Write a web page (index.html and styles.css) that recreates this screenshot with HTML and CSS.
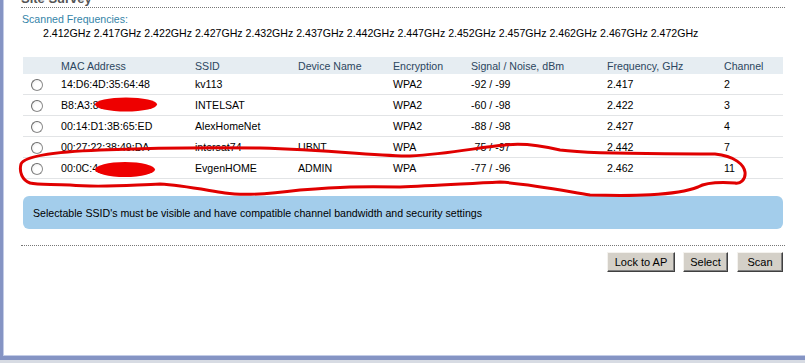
FILE: index.html
```html
<!DOCTYPE html>
<html lang="en">
<head>
    <meta charset="UTF-8">
    <title>Site Survey</title>
    <link rel="stylesheet" href="styles.css">
</head>
<body>
    <!-- Window Frame -->
    <div class="frame">
        <div class="page">
            <h2 class="title">Site Survey</h2>
            <div class="label">Scanned Frequencies:</div>
            <div class="freqs">2.412GHz 2.417GHz 2.422GHz 2.427GHz 2.432GHz 2.437GHz 2.442GHz 2.447GHz 2.452GHz 2.457GHz 2.462GHz 2.467GHz 2.472GHz</div>

            <!-- Survey Table -->
            <table class="survey">
                <colgroup>
                    <col style="width:38px">
                    <col style="width:134px">
                    <col style="width:103px">
                    <col style="width:95px">
                    <col style="width:78px">
                    <col style="width:136px">
                    <col style="width:117px">
                    <col>
                </colgroup>
                <thead>
                    <tr>
                        <th></th>
                        <th>MAC Address</th>
                        <th>SSID</th>
                        <th>Device Name</th>
                        <th>Encryption</th>
                        <th>Signal / Noise, dBm</th>
                        <th>Frequency, GHz</th>
                        <th>Channel</th>
                    </tr>
                </thead>
                <tbody>
                    <tr>
                        <td><span class="radio"></span></td>
                        <td>14:D6:4D:35:64:48</td>
                        <td>kv113</td>
                        <td></td>
                        <td>WPA2</td>
                        <td>-92 / -99</td>
                        <td>2.417</td>
                        <td>2</td>
                    </tr>
                    <tr>
                        <td><span class="radio"></span></td>
                        <td>B8:A3:8</td>
                        <td>INTELSAT</td>
                        <td></td>
                        <td>WPA2</td>
                        <td>-60 / -98</td>
                        <td>2.422</td>
                        <td>3</td>
                    </tr>
                    <tr>
                        <td><span class="radio"></span></td>
                        <td>00:14:D1:3B:65:ED</td>
                        <td>AlexHomeNet</td>
                        <td></td>
                        <td>WPA2</td>
                        <td>-88 / -98</td>
                        <td>2.427</td>
                        <td>4</td>
                    </tr>
                    <tr>
                        <td><span class="radio"></span></td>
                        <td>00:27:22:38:49:DA</td>
                        <td>intersat74</td>
                        <td>UBNT</td>
                        <td>WPA</td>
                        <td>-75 / -97</td>
                        <td>2.442</td>
                        <td>7</td>
                    </tr>
                    <tr>
                        <td><span class="radio"></span></td>
                        <td>00:0C:4</td>
                        <td>EvgenHOME</td>
                        <td>ADMIN</td>
                        <td>WPA</td>
                        <td>-77 / -96</td>
                        <td>2.462</td>
                        <td>11</td>
                    </tr>
                </tbody>
            </table>

            <div class="note">Selectable SSID's must be visible and have compatible channel bandwidth and security settings</div>

            <div class="actions">
                <button class="btn btn-lock">Lock to AP</button>
                <button class="btn btn-select">Select</button>
                <button class="btn btn-scan">Scan</button>
            </div>
        </div>

        <!-- Hand-drawn marks over the screenshot -->
        <svg class="marks" width="805" height="363" viewBox="0 0 805 363">
            <ellipse cx="126" cy="104.5" rx="31" ry="7" fill="#ee0000"/>
            <ellipse cx="125" cy="169.5" rx="30" ry="7.5" fill="#ee0000"/>
            <path d="M30 183 C22 180 19 172 21 164 C24 157 50 152 100 150 C150 148 200 147 260 148 C330 150 380 156 410 156 C450 154 480 147 505 145 C520 143 535 144 560 150 C600 155 660 153 715 154 C735 156 744 165 745 172 C746 180 740 184 735 183 C720 182 705 183 698 187 C675 196 630 196 590 195 C560 190 530 184 500 182 C460 184 430 186 400 187 C360 186 340 187 300 190 C270 194 245 196 225 193 C200 189 180 185 160 184 C130 185 100 188 70 185 C50 184 38 185 30 183"
                  fill="none" stroke="#e00000" stroke-width="3" stroke-linecap="round" stroke-linejoin="round"/>
        </svg>
    </div>
</body>
</html>
```

FILE: styles.css
```css
/* Global Styling */
body {
    margin: 0;
    background-color: #d7dbe3;
    font-family: "Liberation Sans", Arial, sans-serif;
    font-size: 10.6px;
    color: #000;
}
/* Window Frame */
.frame {
    position: relative;
    width: 805px;
    height: 360px;
    box-sizing: border-box;
    background-color: #fff;
    border-left: 3px solid #8594c4;
    border-bottom: 4px solid #8594c4;
    box-shadow: inset 1px -1px 0 #c3cce6;
    overflow: hidden;
}
.page {
    padding: 0 20px 0 18px;
}
/* Title */
.title {
    margin: -9px 0 0;
    height: 15px;
    padding-bottom: 1px;
    font-size: 13px;
    line-height: 15px;
    color: #555;
    border-bottom: 1px dotted #777;
}
.label {
    margin-top: 5px;
    padding-left: 1px;
    line-height: 13px;
    color: #3484a8;
}
.freqs {
    margin-top: 1px;
    padding-left: 22px;
    line-height: 13px;
}
/* Survey Table */
.survey {
    margin: 17px 2px 0 2px;
    width: 760px;
    border-collapse: collapse;
    table-layout: fixed;
}
.survey th {
    height: 17px;
    padding: 0;
    text-align: left;
    font-weight: normal;
    color: #2c4660;
    background-color: #e6edf2;
}
.survey td {
    height: 20px;
    padding: 0;
    border-bottom: 1px solid #e2e4e6;
    white-space: nowrap;
}
.radio {
    display: inline-block;
    width: 10px;
    height: 10px;
    margin: 2px 0 0 8px;
    border: 1px solid #8c8c8c;
    border-left-color: #6a6a6a;
    border-top-color: #6a6a6a;
    border-radius: 50%;
    background: radial-gradient(circle at 60% 60%, #ffffff 40%, #e4e4e4 100%);
    vertical-align: middle;
}
/* Info Note */
.note {
    margin: 17px 2px 0 2px;
    height: 33px;
    padding-left: 10px;
    line-height: 34px;
    background-color: #a3cdeb;
    border-radius: 6px;
}
/* Buttons */
.actions {
    margin-top: 16px;
    padding-top: 6px;
    border-top: 1px dotted #777;
    display: flex;
    justify-content: flex-end;
    gap: 8px;
    padding-right: 2px;
}
.btn {
    height: 20px;
    padding: 0;
    font-family: "Liberation Sans", Arial, sans-serif;
    font-size: 11px;
    color: #000;
    background-color: #d4d0c8;
    border: 1px solid;
    border-color: #f4f2ee #404040 #404040 #f4f2ee;
    box-shadow: inset -1px -1px 0 #808080;
}
.btn-lock {
    width: 68px;
}
.btn-select {
    width: 45px;
}
.btn-scan {
    width: 46px;
    margin-left: 1px;
}
.marks {
    position: absolute;
    top: 0;
    left: -3px;
    pointer-events: none;
}
```
